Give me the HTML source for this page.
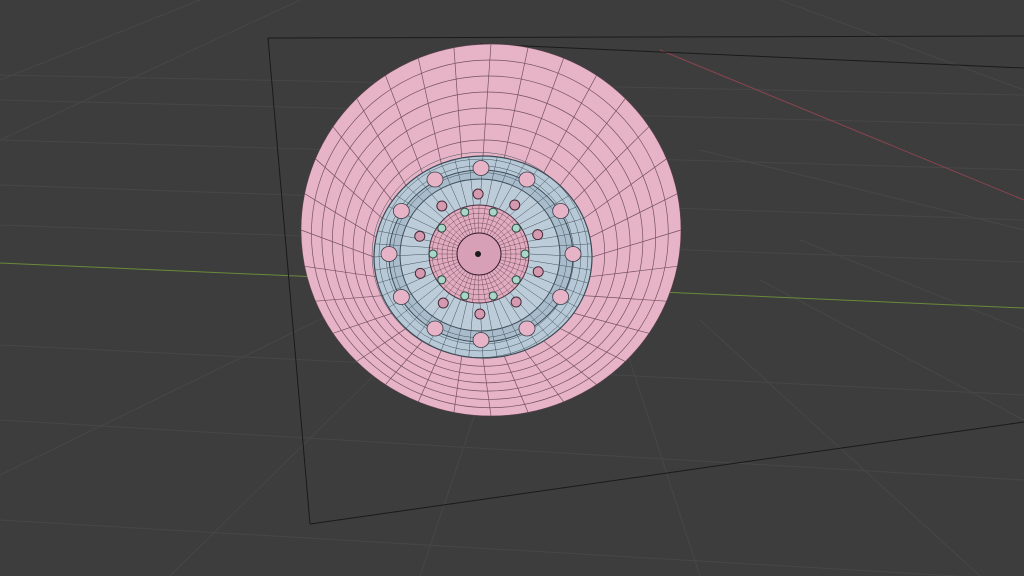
<!DOCTYPE html>
<html><head><meta charset="utf-8"><style>
html,body{margin:0;padding:0;background:#3d3d3d;width:1024px;height:576px;overflow:hidden}
svg{display:block}
</style></head><body>
<svg id="s" width="1024" height="576" viewBox="0 0 1024 576" xmlns="http://www.w3.org/2000/svg">
<rect width="1024" height="576" fill="#3d3d3d"/>
<g id="grid" stroke="#474747" stroke-width="1" fill="none">
<line x1="0" y1="140" x2="1024" y2="170"/>
<line x1="0" y1="185" x2="1024" y2="220"/>
<line x1="0" y1="225" x2="1024" y2="262"/>
<line x1="0" y1="345" x2="1024" y2="395"/>
<line x1="0" y1="420" x2="1024" y2="480"/>
<line x1="0" y1="520" x2="1024" y2="580"/>
<line x1="0" y1="100" x2="1024" y2="125"/>
<line x1="0" y1="75" x2="1024" y2="95"/>
<line x1="300" y1="0" x2="0" y2="140"/>
<line x1="360" y1="300" x2="0" y2="475"/>
<line x1="420" y1="330" x2="170" y2="576"/>
<line x1="500" y1="340" x2="420" y2="576"/>
<line x1="620" y1="330" x2="700" y2="576"/>
<line x1="700" y1="320" x2="980" y2="576"/>
<line x1="760" y1="280" x2="1024" y2="420"/>
<line x1="800" y1="240" x2="1024" y2="330"/>
<line x1="700" y1="150" x2="1024" y2="230"/>
<line x1="200" y1="0" x2="0" y2="80"/>
<line x1="780" y1="0" x2="1024" y2="90"/>
</g>
<line x1="0" y1="263" x2="1024" y2="308" stroke="#6a8a3a" stroke-width="1"/>
<line x1="660" y1="50" x2="1024" y2="200" stroke="#8a4450" stroke-width="1"/>
<g stroke="#1a1a1a" stroke-width="1" fill="none">
<line x1="268" y1="38" x2="1024" y2="36"/>
<line x1="268" y1="38" x2="310" y2="524"/>
<line x1="310" y1="524" x2="1024" y2="422"/>
<line x1="480" y1="44" x2="1024" y2="68"/>
</g>
<ellipse cx="491" cy="230" rx="190" ry="186" fill="#e6b4c6"/>
<g id="tire" stroke="#5a3a48" stroke-width="0.7" fill="none" opacity="0.8"></g>
<ellipse cx="483" cy="257" rx="109" ry="101" fill="#b7c9d6" stroke="#3d4a55" stroke-width="1.2"/>
<ellipse cx="481" cy="256" rx="92" ry="86" fill="#a9bccb" stroke="#3d4a55" stroke-width="1"/>
<ellipse cx="480" cy="255" rx="80" ry="76" fill="#bccdd9" stroke="#3d4a55" stroke-width="1"/>
<g id="rim" stroke="#45525e" stroke-width="0.5" fill="none"></g>
<g id="holes" fill="#e6b4c6" stroke="#3d3d4a" stroke-width="0.8"></g>
<ellipse cx="479" cy="254" rx="50" ry="49" fill="#e2acc0" stroke="#4a3040" stroke-width="1"/>
<g id="hub" stroke="#5a3a48" stroke-width="0.4" fill="none"></g>
<ellipse cx="479" cy="254" rx="22" ry="21" fill="#d8a0b6" stroke="#3a2030" stroke-width="1"/>
<g id="nuts"></g>
<circle cx="478" cy="254" r="3" fill="#1a1a1a"/>
</svg>
<script>
var NS="http://www.w3.org/2000/svg";
function el(p,t,a){var e=document.createElementNS(NS,t);for(var k in a)e.setAttribute(k,a[k]);p.appendChild(e);return e;}
var tire=document.getElementById('tire');
for(var i=0;i<8;i++){var f=i/7;el(tire,'ellipse',{cx:483+8*f,cy:257-27*f,rx:109+81*f,ry:101+85*f});}
for(var i=0;i<32;i++){var a=i/32*Math.PI*2;el(tire,'line',{x1:483+109*Math.cos(a),y1:257+101*Math.sin(a),x2:491+190*Math.cos(a),y2:230+186*Math.sin(a)});}
var rim=document.getElementById('rim');
for(var i=0;i<5;i++){var r=80+i*7;el(rim,'ellipse',{cx:480,cy:255,rx:r,ry:r*0.95});}
for(var i=0;i<48;i++){var a=i/48*Math.PI*2;el(rim,'line',{x1:480+50*Math.cos(a),y1:254+49*Math.sin(a),x2:483+109*Math.cos(a),y2:257+101*Math.sin(a)});}
var holes=document.getElementById('holes');
for(var i=0;i<12;i++){var a=i/12*Math.PI*2-Math.PI/2;el(holes,'ellipse',{cx:481+92*Math.cos(a),cy:254+86*Math.sin(a),rx:8,ry:7.5});}
var hub=document.getElementById('hub');
for(var i=0;i<6;i++){var r=22+i*5;el(hub,'ellipse',{cx:479,cy:254,rx:r,ry:r*0.97});}
for(var i=0;i<48;i++){var a=i/48*Math.PI*2;el(hub,'line',{x1:478,y1:254,x2:479+50*Math.cos(a),y2:254+49*Math.sin(a)});}
var nuts=document.getElementById('nuts');
for(var i=0;i<10;i++){var a=i/10*Math.PI*2+0.3;el(nuts,'circle',{cx:479+62*Math.cos(a),cy:254+60*Math.sin(a),r:5,fill:'#d49ab0',stroke:'#4a2a38','stroke-width':1});}
for(var i=0;i<10;i++){var a=i/10*Math.PI*2;el(nuts,'circle',{cx:479+46*Math.cos(a),cy:254+44*Math.sin(a),r:4,fill:'#a9d6c8',stroke:'#2a4a40','stroke-width':1});}
</script>
</body></html>
